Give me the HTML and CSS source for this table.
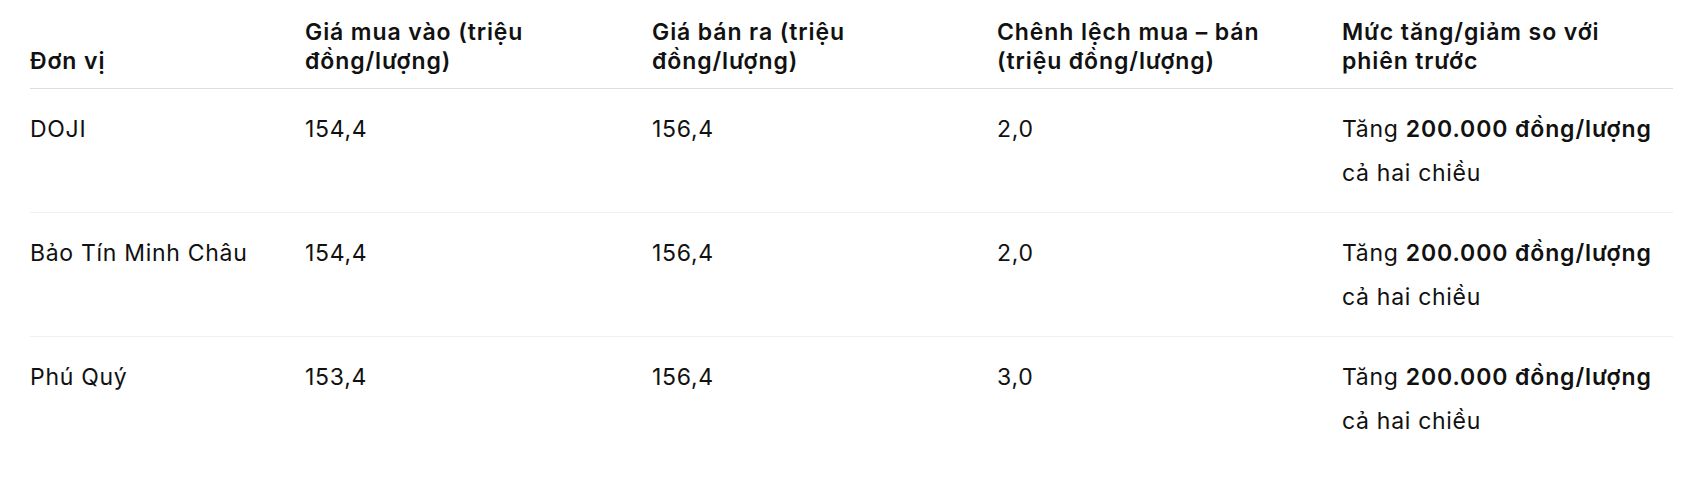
FILE: index.html
```html
<!DOCTYPE html>
<html lang="vi">
<head>
<meta charset="utf-8">
<title>Giá vàng</title>
<link rel="stylesheet" href="styles.css">
</head>
<body>
<div class="wrap">
<table class="price-table">
  <colgroup>
    <col class="c1"><col class="c2"><col class="c3"><col class="c4"><col class="c5">
  </colgroup>
  <thead>
    <tr>
      <th>Đơn vị</th>
      <th>Giá mua vào (triệu đồng/lượng)</th>
      <th>Giá bán ra (triệu đồng/lượng)</th>
      <th>Chênh lệch mua – bán (triệu đồng/lượng)</th>
      <th>Mức tăng/giảm so với phiên trước</th>
    </tr>
  </thead>
  <tbody>
    <tr>
      <td>DOJI</td>
      <td>154,4</td>
      <td>156,4</td>
      <td>2,0</td>
      <td>Tăng <strong>200.000 đồng/lượng</strong> cả hai chiều</td>
    </tr>
    <tr>
      <td>Bảo Tín Minh Châu</td>
      <td>154,4</td>
      <td>156,4</td>
      <td>2,0</td>
      <td>Tăng <strong>200.000 đồng/lượng</strong> cả hai chiều</td>
    </tr>
    <tr>
      <td>Phú Quý</td>
      <td>153,4</td>
      <td>156,4</td>
      <td>3,0</td>
      <td>Tăng <strong>200.000 đồng/lượng</strong> cả hai chiều</td>
    </tr>
  </tbody>
</table>
</div>
</body>
</html>
```

FILE: styles.css
```css
html, body {
  margin: 0;
  padding: 0;
  background: #ffffff;
}
body {
  font-family: Inter, "Noto Sans", "Liberation Sans", sans-serif;
  color: #111111;
}
.wrap {
  padding: 0 19px 0 30px;
}
.price-table {
  width: 1643px;
  border-collapse: collapse;
  table-layout: fixed;
}
.c1 { width: 275px; }
.c2 { width: 347px; }
.c3 { width: 345px; }
.c4 { width: 345px; }
.c5 { width: 331px; }
.price-table th {
  text-align: left;
  vertical-align: bottom;
  font-weight: 600;
  font-size: 23px;
  line-height: 28.5px;
  letter-spacing: 0.9px;
  padding: 18px 24px 13px 0;
  border-bottom: 1px solid #dedede;
}
.price-table td {
  text-align: left;
  vertical-align: top;
  font-size: 23px;
  line-height: 44px;
  letter-spacing: 0.7px;
  padding: 18px 24px 17px 0;
  border-bottom: 1px solid #f0f0f0;
}
.price-table td:last-child {
  padding-right: 0;
}
.price-table tbody tr:last-child td {
  border-bottom: none;
}
.price-table strong {
  font-weight: 600;
  letter-spacing: 0.9px;
}
```
